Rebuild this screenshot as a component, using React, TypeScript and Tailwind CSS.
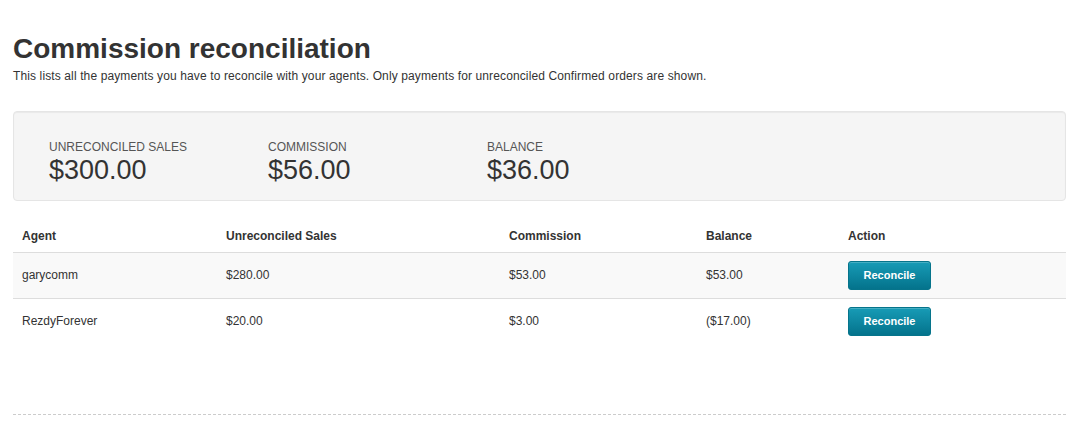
import React from "react"

const totals = [
  { label: "Unreconciled Sales", value: "$300.00" },
  { label: "Commission", value: "$56.00" },
  { label: "Balance", value: "$36.00" },
]

const rows = [
  { agent: "garycomm", sales: "$280.00", commission: "$53.00", balance: "$53.00" },
  { agent: "RezdyForever", sales: "$20.00", commission: "$3.00", balance: "($17.00)" },
]

export default function App() {
  return (
    <div
      className="min-h-[428px] bg-white px-[13px] pt-[32px] text-[12px] text-[#333]"
      style={{ fontFamily: '"Liberation Sans", Arial, sans-serif' }}
    >
      <h1 className="text-[28px] font-bold leading-[34px] text-[#333]">Commission reconciliation</h1>
      <p className="mt-[2px] leading-[17px] tracking-[0.12px]">
        This lists all the payments you have to reconcile with your agents. Only payments for unreconciled Confirmed orders are shown.
      </p>

      <div className="mt-[26px] flex h-[90px] rounded-[4px] border border-[#e5e5e5] bg-[#f5f5f5] pl-[35px] pt-[28px] shadow-[inset_0_1px_1px_rgba(0,0,0,0.05)]">
        {totals.map((t) => (
          <div key={t.label} className="w-[219px]">
            <div className="text-[12px] uppercase leading-[14px] text-[#555]">{t.label}</div>
            <div className="mt-[1px] text-[27px] leading-[31px] text-[#333]">{t.value}</div>
          </div>
        ))}
      </div>

      <table className="mt-[20px] w-full border-collapse">
        <thead>
          <tr className="h-[31px] text-left">
            <th className="w-[204px] pl-[9px] font-bold">Agent</th>
            <th className="w-[283px] pl-[9px] font-bold">Unreconciled Sales</th>
            <th className="w-[197px] pl-[9px] font-bold">Commission</th>
            <th className="w-[142px] pl-[9px] font-bold">Balance</th>
            <th className="pl-[9px] font-bold">Action</th>
          </tr>
        </thead>
        <tbody>
          {rows.map((r, i) => (
            <tr
              key={r.agent}
              className={`h-[46px] border-t border-[#dddddd] ${i === 0 ? "bg-[#f9f9f9]" : "bg-white"}`}
            >
              <td className="pl-[9px]">{r.agent}</td>
              <td className="pl-[9px]">{r.sales}</td>
              <td className="pl-[9px]">{r.commission}</td>
              <td className="pl-[9px]">{r.balance}</td>
              <td className="pl-[9px]">
                <button className="h-[29px] w-[83px] rounded-[3px] border border-[#06748b] bg-gradient-to-b from-[#179bb6] to-[#04738c] text-[11px] font-bold text-white shadow-[inset_0_1px_0_rgba(255,255,255,0.2)]">
                  Reconcile
                </button>
              </td>
            </tr>
          ))}
        </tbody>
      </table>

      <div className="mt-[70px] border-t border-dashed border-[#cccccc]" />
    </div>
  )
}
